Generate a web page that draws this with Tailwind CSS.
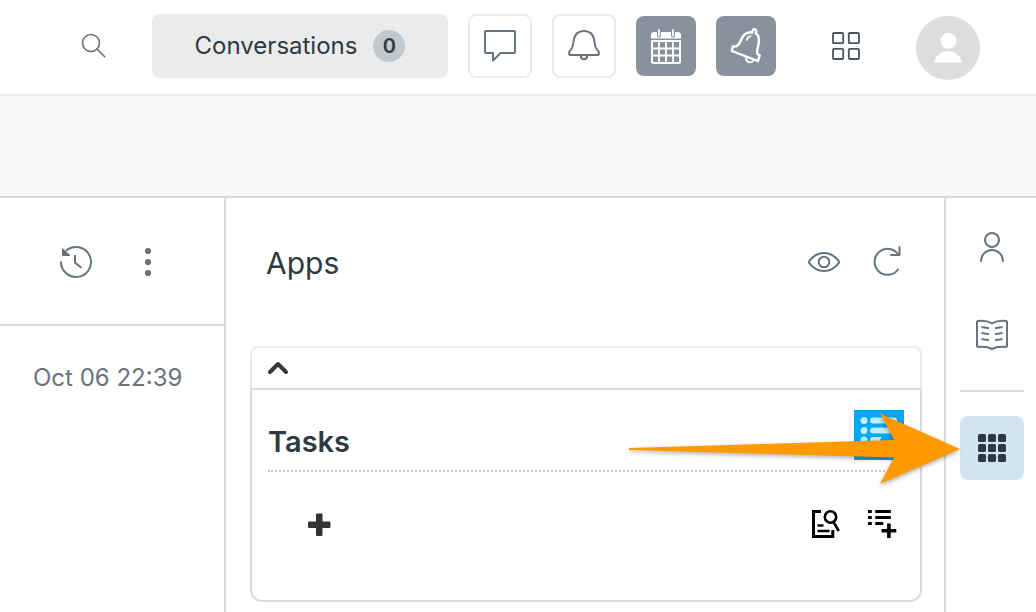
<!DOCTYPE html>
<html lang="en">
<head>
<meta charset="utf-8">
<meta name="viewport" content="width=device-width, initial-scale=1">
<title>Apps</title>
<script src="https://cdn.jsdelivr.net/npm/@tailwindcss/browser@4"></script>
</head>
<body class="flex min-h-screen flex-col bg-white font-['Inter','Liberation_Sans',sans-serif] text-[#2f3941]">

<header class="flex h-24 shrink-0 items-center justify-end border-b-2 border-[#ebebeb] pr-14 pb-0.5">
  <button type="button" aria-label="Search" class="mr-8 flex size-12 items-center justify-center text-[#68737d]">
    <svg class="size-8" viewBox="0 0 32 32" fill="none" stroke="currentColor" stroke-width="1.6" stroke-linecap="round"><circle cx="11" cy="13" r="8.500"/><path d="M17 19 24.700 26.700"/></svg>
  </button>
  <button type="button" class="mr-5 flex h-16 w-[296px] items-center justify-center gap-4 rounded-lg bg-[#e9ebed] text-2xl">
    <span>Conversations</span>
    <span class="flex size-8 items-center justify-center rounded-full bg-[#c2c8cc] text-xl font-semibold">0</span>
  </button>
  <button type="button" aria-label="Messages" class="mr-5 flex size-16 items-center justify-center rounded-lg border-2 border-[#ebebeb] text-[#68737d]">
    <svg class="size-9" viewBox="0 0 36 36" fill="none" stroke="currentColor" stroke-width="2" stroke-linejoin="round"><path d="M4 3h28a1 1 0 0 1 1 1v20a1 1 0 0 1-1 1H18.500L11 32.500V25H4a1 1 0 0 1-1-1V4a1 1 0 0 1 1-1z"/></svg>
  </button>
  <button type="button" aria-label="Notifications" class="mr-5 flex size-16 items-center justify-center rounded-lg border-2 border-[#ebebeb] text-[#68737d]">
    <svg class="size-9" viewBox="0 0 36 36" fill="none" stroke="currentColor" stroke-width="2" stroke-linejoin="round"><path d="M18 3c-6 0-9.500 4-10.300 9.500C7.200 17 6.800 20 4.700 21.800 3.500 22.800 3 24 3 25.200 3 26.300 3.700 27 4.800 27h26.400c1.100 0 1.800-.7 1.800-1.800 0-1.200-.5-2.400-1.700-3.400-2.100-1.800-2.500-4.800-3-9.300C27.500 7 24 3 18 3z"/><path d="M14.800 27.500c0 2.200 1.200 3.700 3.200 3.700s3.200-1.500 3.200-3.700"/></svg>
  </button>
  <button type="button" aria-label="Calendar" class="mr-5 flex size-[60px] items-center justify-center rounded-lg bg-[#87929d] text-white">
    <svg class="size-9" viewBox="0 0 36 36" fill="none" stroke="currentColor"><path d="M3 10.500V7a3 3 0 0 1 3-3h24a3 3 0 0 1 3 3v3.500z" fill="currentColor" stroke="none"/><path d="M4 12.900V33.700a1.200 1.200 0 0 0 1.200 1.200h25.600a1.200 1.200 0 0 0 1.200-1.200V12.900z" stroke-width="2"/><path d="M11 13v22M18 13v22M25 13v22M4 20.500h28M4 27.500h28" stroke-width="1.800"/><path d="M11 3v4.500M25 3v4.500" stroke="#87929d" stroke-width="4" stroke-linecap="round"/><path d="M11 2v5.500M25 2v5.500" stroke-width="1.800" stroke-linecap="round"/></svg>
  </button>
  <button type="button" aria-label="Ringing alerts" class="mr-12 flex size-[60px] items-center justify-center rounded-lg bg-[#87929d] text-white">
    <svg class="size-9" viewBox="0 0 36 36" fill="none" stroke="currentColor" stroke-width="2.400" stroke-linejoin="round" stroke-linecap="round"><path d="M24.500 4.300C19 3.800 15.300 6.500 13.500 11c-1.400 3.800-3.500 7-6.300 7.600L5 18.200 3.800 23 30 33.200 31.700 27.500 29.500 26c-.8-2.500-.2-4.800.6-7.800C31.600 12.800 31.400 8 28 5.500"/><path d="M24.500 4.500c0-2 .7-3.200 2-3.200s2.500 1.400 1.500 4.200"/><path d="M18.800 12c.5-2 1.900-3.500 3.900-4" stroke-width="1.800"/><path d="M18 30.500c.6 2.500 2.200 3.900 4.200 3.900 1.600 0 2.800-.7 3.300-1.900" stroke-width="1.800"/></svg>
  </button>
  <button type="button" aria-label="Products" class="mr-12 flex size-11 items-center justify-center text-[#49545c]">
    <svg class="size-8" viewBox="0 0 32 32" fill="none" stroke="currentColor" stroke-width="1.800"><rect x="3" y="3" width="10.200" height="10.200" rx="1"/><rect x="18.800" y="3" width="10.200" height="10.200" rx="1"/><rect x="3" y="18.800" width="10.200" height="10.200" rx="1"/><rect x="18.800" y="18.800" width="10.200" height="10.200" rx="1"/></svg>
  </button>
  <button type="button" aria-label="Profile" class="mt-1 size-16 rounded-full bg-[#dddddd] text-white">
    <svg class="size-16" viewBox="0 0 64 64" fill="currentColor"><circle cx="32.500" cy="24.800" r="8"/><path d="M18 46.500C19.800 39 25.500 35 32 35s12.200 4 14 11.500z"/></svg>
  </button>
</header>

<div class="h-[102px] shrink-0 border-b-2 border-[#d8dcde] bg-[#f8f9f9]"></div>

<div class="flex grow">
  <section class="w-[226px] shrink-0 border-r-2 border-[#d8dcde] text-[#68737d]">
    <div class="flex h-32 items-center gap-5 border-b-2 border-[#d8dcde] pl-12">
      <button type="button" aria-label="History" class="flex size-14 items-center justify-center">
        <svg class="size-9" viewBox="0 0 36 36" fill="none" stroke="currentColor" stroke-width="2"><path d="M3 18.500A15 15 0 1 0 8 7.800"/><path d="M4.500 5.500v7h7.500z" fill="currentColor" stroke-linejoin="round" stroke-width="1"/><path d="M17 12v7.800l6.500 5"/></svg>
      </button>
      <button type="button" aria-label="More options" class="flex h-14 w-12 items-center justify-center">
        <svg class="size-8" viewBox="0 0 32 32" fill="currentColor"><circle cx="16" cy="6" r="3.100"/><circle cx="16" cy="17" r="3.100"/><circle cx="16" cy="28" r="3.100"/></svg>
      </button>
    </div>
    <time class="block pt-9 pl-[33px] text-2xl">Oct 06 22:39</time>
  </section>

  <main class="min-w-0 grow pr-[22px] pl-6">
    <div class="flex h-[148px] items-start justify-between pt-10 pr-0.5 pl-4">
      <h1 class="pt-[3px] text-3xl leading-[44px]">Apps</h1>
      <div class="flex text-[#68737d]">
        <button type="button" aria-label="Show or hide apps" class="flex h-12 w-16 items-center justify-center">
          <svg class="size-9" viewBox="0 0 36 36" fill="none" stroke="currentColor" stroke-width="2"><path d="M3.200 17.200C7 12 12 9 18 9s11 3 14.800 8.200c.4.500.4 1.100 0 1.600C29 24 24 27 18 27S7 24 3.200 18.800c-.4-.5-.4-1.100 0-1.600z"/><circle cx="18" cy="18" r="5.300"/></svg>
        </button>
        <button type="button" aria-label="Reload apps" class="flex h-12 w-16 items-center justify-center">
          <svg class="size-9" viewBox="0 0 36 36" fill="none" stroke="currentColor" stroke-width="2" stroke-linecap="round" stroke-linejoin="round"><path d="M28 25.500A13 13 0 1 1 28.500 10.800"/><path d="M29.500 3v8H21"/></svg>
        </button>
      </div>
    </div>

    <article>
      <div class="flex h-[42px] items-center rounded-t-lg border-x-2 border-t-2 border-[#ebebeb] pl-3">
        <button type="button" aria-label="Collapse Tasks" class="flex h-8 w-7 items-center justify-center">
          <svg class="size-7" viewBox="0 0 28 28" fill="none" stroke="currentColor" stroke-width="4" stroke-linecap="round" stroke-linejoin="round"><path d="m6 18 8-8 8 8"/></svg>
        </button>
      </div>
      <div class="h-[214px] rounded-b-xl border-2 border-[#d8dcde] px-4">
        <div class="flex h-[82px] justify-between border-b-2 border-dotted border-[#c2c8cc] pt-5">
          <h2 class="pt-3 text-[29px] leading-10 font-semibold">Tasks</h2>
          <svg class="size-[50px]" viewBox="0 0 50 50" role="img" aria-label="Tasks app logo"><path fill="#00a8f7" d="M0 0h50v50H0z"/><g fill="#c4ebff"><circle cx="10" cy="10.500" r="3.500"/><circle cx="10" cy="20.500" r="3.500"/><circle cx="10" cy="30" r="3.500"/><rect x="16" y="7.500" width="27" height="6" rx="3"/><rect x="16" y="17.500" width="24" height="6" rx="3"/><rect x="16" y="27" width="14" height="6" rx="3"/></g><circle cx="35" cy="34" r="10" fill="#00a8f7"/></svg>
        </div>
        <div class="flex h-[104px] items-center justify-between pr-1 pl-[31px]">
          <button type="button" aria-label="Add task" class="flex size-10 items-center justify-center text-[#333333]">
            <svg class="size-7" viewBox="0 0 28 28" fill="currentColor"><rect x="11" y="3.500" width="6.500" height="22.500" rx="1.200"/><rect x="3" y="11.500" width="22.500" height="6.500" rx="1.200"/></svg>
          </button>
          <div class="flex gap-5 text-black">
            <button type="button" aria-label="Search tasks" class="flex size-9 items-center justify-center">
              <svg class="size-8" viewBox="0 0 32 32" fill="none" stroke="currentColor"><path d="M11 3.500H3.500v25h19.300V22" stroke-width="3"/><circle cx="20.500" cy="9" r="5.700" stroke-width="2.600"/><path d="m23.500 14 5.300 9" stroke-width="2.600"/><path d="M7.500 17.500h6M7.500 23h12" stroke-width="2.400"/></svg>
            </button>
            <button type="button" aria-label="Add to list" class="flex size-9 items-center justify-center">
              <svg class="size-8" viewBox="0 0 32 32" fill="none" stroke="currentColor" stroke-width="2.800"><path d="M2 3.500h3.800M2 9.500h3.800M2 15.500h3.800M9.300 3.500h15.500M9.300 9.500h15.500M9.300 15.500h8"/><path d="M15.500 22.800h14.800M22.900 15.600V30" stroke-width="3.600"/></svg>
            </button>
          </div>
        </div>
      </div>
    </article>
  </main>

  <nav aria-label="Context panel" class="relative flex w-[92px] shrink-0 flex-col items-center border-l-2 border-[#d8dcde] pt-[18px] pl-0.5 text-[#68737d]">
    <button type="button" aria-label="User" class="flex size-16 items-center justify-center">
      <svg class="size-9" viewBox="0 0 36 36" fill="none" stroke="currentColor" stroke-width="2" stroke-linecap="round"><circle cx="18" cy="10" r="7"/><path d="M7 31a11 11 0 0 1 22 0"/></svg>
    </button>
    <button type="button" aria-label="Knowledge" class="mt-6 flex size-16 items-center justify-center">
      <svg class="size-9" viewBox="0 0 36 36" fill="none" stroke="currentColor" stroke-width="2" stroke-linejoin="round"><path d="M18 5.300c-4-2.300-8.500-3-14-2.300a1 1 0 0 0-1 1V28a1 1 0 0 0 1 1c5.500-.6 10-.2 14 2 4-2.200 8.500-2.600 14-2a1 1 0 0 0 1-1V4a1 1 0 0 0-1-1C26.500 2.300 22 3 18 5.300z"/><path d="m7.500 9 7.500 1.300M7.500 15l7.500 1.300M7.500 21l7.500 1.300M28.500 9 21 10.300M28.500 15 21 16.300M28.500 21 21 22.300"/></svg>
    </button>
    <hr class="mt-[22px] w-16 border-t-2 border-[#d8dcde]">
    <button type="button" aria-label="Apps" aria-pressed="true" class="mt-6 flex size-16 items-center justify-center rounded-lg bg-[#d3e4f1] text-[#2f3941]">
      <svg class="size-8" viewBox="0 0 32 32" fill="currentColor"><rect x="2" y="2" width="8" height="8" rx="1.500"/><rect x="12" y="2" width="8" height="8" rx="1.500"/><rect x="22" y="2" width="8" height="8" rx="1.500"/><rect x="2" y="12" width="8" height="8" rx="1.500"/><rect x="12" y="12" width="8" height="8" rx="1.500"/><rect x="22" y="12" width="8" height="8" rx="1.500"/><rect x="2" y="22" width="8" height="8" rx="1.500"/><rect x="12" y="22" width="8" height="8" rx="1.500"/><rect x="22" y="22" width="8" height="8" rx="1.500"/></svg>
    </button>
    <!-- Pointer to the active Apps button -->
    <svg class="pointer-events-none absolute top-[212px] right-[75px] h-20 w-[334px] drop-shadow-[0_2px_2px_rgba(0,0,0,0.3)]" viewBox="0 0 334 80" fill="#ff9900" aria-hidden="true"><path d="M2 38 267 30 253 3.500 333 39 253 74 267 47.500 2 40z"/></svg>
  </nav>
</div>
</body>
</html>
